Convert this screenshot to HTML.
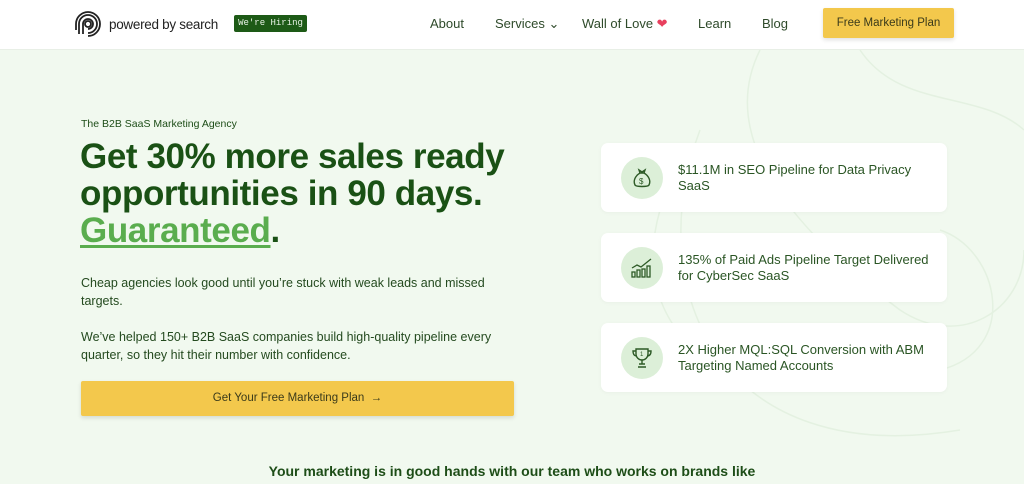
<!DOCTYPE html>
<html><head><meta charset="utf-8"><style>
*{margin:0;padding:0;box-sizing:border-box}
body{width:1024px;height:484px;overflow:hidden;font-family:"Liberation Sans",sans-serif;background:#f1f9ef;position:relative;color:#1d4d17}
.nav{position:absolute;top:0;left:0;width:1024px;height:50px;background:#fff;border-bottom:1px solid #e8efe6}
.logo{position:absolute;left:74px;top:10px;display:flex;align-items:center}
.logo span{font-size:13.5px;color:#222;margin-left:7px;letter-spacing:-0.3px}
.hire{position:absolute;left:234px;top:15px;width:73px;height:17px;background:#1d5a16;color:#e8f2e5;font-family:"Liberation Mono",monospace;font-size:9px;line-height:17px;text-align:center;border-radius:2px}
.nl{position:absolute;top:16px;font-size:13px;color:#2e4a2a}
.cta{position:absolute;left:823px;top:8px;width:131px;height:30px;background:#f3c84c;border-radius:2px;font-size:11.5px;color:#3a3a1a;text-align:center;line-height:30px;box-shadow:0 2px 4px rgba(0,0,0,.12)}
.tag{position:absolute;left:81px;top:118px;font-size:10.5px;color:#1d4d17}
h1{position:absolute;left:80px;top:138px;font-size:35px;line-height:37px;font-weight:bold;color:#1a5115;letter-spacing:-0.4px}
h1 u{color:#5aad4e;text-decoration-thickness:3px;text-underline-offset:3px}
p{position:absolute;left:81px;font-size:12.5px;line-height:18px;color:#244a1f;width:440px}
.btn{position:absolute;left:81px;top:381px;width:433px;height:35px;background:#f3c84c;border-radius:2px;text-align:center;line-height:35px;font-size:11.5px;color:#3a3a1a;box-shadow:0 2px 4px rgba(0,0,0,.12)}
.card{position:absolute;left:601px;width:346px;height:69px;background:#fff;border-radius:7px;box-shadow:0 1px 4px rgba(0,0,0,.04)}
.ic{position:absolute;left:20px;top:14px;width:42px;height:42px;border-radius:50%;background:#dcefd8}
.ic svg{position:absolute;left:9px;top:9px}
.ct{position:absolute;left:77px;top:19px;font-size:13px;line-height:16px;color:#2a5524;width:252px}
.bottom{position:absolute;top:463px;left:0;width:1024px;text-align:center;font-size:14px;font-weight:bold;color:#1d4d17}
</style></head><body>
<svg style="position:absolute;left:560px;top:50px" width="464" height="434" fill="none" stroke="#e4f1e1" stroke-width="1.5">
<path d="M300 0 C340 60 420 40 464 80"/><path d="M100 160 C60 300 200 380 380 320 C460 300 440 200 380 180"/>
<path d="M140 80 C80 240 160 420 400 380"/><path d="M200 0 C150 100 260 200 340 260 C400 300 464 260 464 200"/>
</svg>
<div class="nav">
<div class="logo"><svg width="28" height="28" viewBox="0 0 28 28" fill="none" stroke="#222" stroke-width="1.8"><circle cx="14" cy="14" r="3"/><path d="M9 24V14a5 5 0 1 1 5 5"/><path d="M5 24V14a9 9 0 1 1 9 9"/><path d="M2 20V14a12 12 0 1 1 12 12"/></svg><span>powered by search</span></div>
<div class="hire">We're Hiring</div>
<div class="nl" style="left:430px">About</div>
<div class="nl" style="left:495px">Services ⌄</div>
<div class="nl" style="left:582px">Wall of Love <span style="color:#e8405e">❤</span></div>
<div class="nl" style="left:698px">Learn</div>
<div class="nl" style="left:762px">Blog</div>
<div class="cta">Free Marketing Plan</div>
</div>
<div class="tag">The B2B SaaS Marketing Agency</div>
<h1>Get 30% more sales ready<br>opportunities in 90 days.<br><u>Guaranteed</u>.</h1>
<p style="top:274px">Cheap agencies look good until you’re stuck with weak leads and missed targets.</p>
<p style="top:328px">We’ve helped 150+ B2B SaaS companies build high-quality pipeline every quarter, so they hit their number with confidence.</p>
<div class="btn">Get Your Free Marketing Plan &nbsp;→</div>
<div class="card" style="top:143px"><div class="ic"><svg width="24" height="24" viewBox="0 0 24 24" fill="none" stroke="#2d5a26" stroke-width="1.4"><path d="M9 4l3 2 3-2-1 3h-4z"/><path d="M10 7C5 10 3 15 5 19c1 2 13 2 14 0 2-4 0-9-5-12"/><text x="9" y="18" font-size="8" fill="#2d5a26" stroke="none" font-family="Liberation Sans">$</text></svg></div><div class="ct">$11.1M in SEO Pipeline for Data Privacy SaaS</div></div>
<div class="card" style="top:233px"><div class="ic"><svg width="24" height="24" viewBox="0 0 24 24" fill="none" stroke="#2d5a26" stroke-width="1.3"><path d="M2 12l5-3 4 2 5-4 5-4"/><rect x="2" y="16" width="3" height="5"/><rect x="7" y="14" width="3" height="7"/><rect x="12" y="13" width="3" height="8"/><rect x="17" y="10" width="3" height="11"/></svg></div><div class="ct">135% of Paid Ads Pipeline Target Delivered for CyberSec SaaS</div></div>
<div class="card" style="top:323px"><div class="ic"><svg width="24" height="24" viewBox="0 0 24 24" fill="none" stroke="#2d5a26" stroke-width="1.4"><path d="M6 3h12v5a6 6 0 0 1-12 0z"/><path d="M6 5H3c0 3 1 5 4 5M18 5h3c0 3-1 5-4 5"/><path d="M12 14v4M8 21h8M9 18h6"/><text x="10" y="10" font-size="6" fill="#2d5a26" stroke="none" font-family="Liberation Sans">1</text></svg></div><div class="ct">2X Higher MQL:SQL Conversion with ABM Targeting Named Accounts</div></div>
<div class="bottom">Your marketing is in good hands with our team who works on brands like</div>
</body></html>
